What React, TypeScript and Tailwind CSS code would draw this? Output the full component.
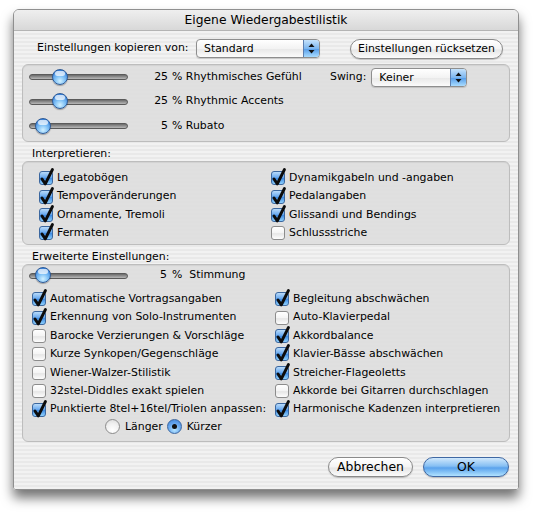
import React from 'react';

const stripes =
  'bg-[repeating-linear-gradient(180deg,#f2f2f2_0px,#f2f2f2_2px,#e9e9e9_2px,#e9e9e9_4px)]';

const Box = ({ checked }: { checked: boolean }) => (
  <span
    className={`relative shrink-0 w-[14px] h-[14px] rounded-[3px] border ${
      checked
        ? 'border-[#3b679f] bg-[linear-gradient(180deg,#b9dbfa_0%,#6aaaf0_45%,#3d8ae3_52%,#8fd0fc_100%)]'
        : 'border-[#8c8c8c] bg-[linear-gradient(180deg,#ffffff_0%,#f4f4f4_50%,#e6e6e6_55%,#fdfdfd_100%)]'
    }`}
  >
    {checked && (
      <svg className="absolute left-0 top-0 overflow-visible" width="14" height="14" viewBox="0 0 14 14">
        <path d="M2 7 L5.3 11.8 L12.4 -2.4" stroke="#0c0c0c" strokeWidth="3" fill="none" strokeLinecap="round" strokeLinejoin="round" />
      </svg>
    )}
  </span>
);

const Check = ({ checked, label }: { checked: boolean; label: string }) => (
  <div className="flex items-center h-[18.4px] gap-[4px]">
    <Box checked={checked} />
    <span className="whitespace-nowrap">{label}</span>
  </div>
);

const Radio = ({ checked, label }: { checked: boolean; label: string }) => (
  <div className="flex items-center gap-[5px]">
    <span
      className={`flex items-center justify-center w-[15px] h-[15px] rounded-full border ${
        checked
          ? 'border-[#3b679f] bg-[radial-gradient(circle_at_50%_75%,#b9e6ff_0%,#6aaaf0_50%,#3d7fd8_100%)]'
          : 'border-[#8c8c8c] bg-[radial-gradient(circle_at_50%_80%,#ffffff_0%,#f0f0f0_55%,#d8d8d8_100%)]'
      }`}
    >
      {checked && <span className="w-[5px] h-[5px] rounded-full bg-[#111]" />}
    </span>
    <span>{label}</span>
  </div>
);

const Slider = ({ thumb }: { thumb: number }) => (
  <div className="relative w-[99px] h-[17px] flex items-center shrink-0">
    <div className="w-full h-[6px] rounded-full border border-[#5a5a5a] bg-[linear-gradient(180deg,#6a6a6a,#9a9a9a_60%,#b8b8b8)]" />
    <span
      className="absolute top-[0px] w-[16px] h-[16px] rounded-full border border-[#2d5a97] bg-[radial-gradient(circle_at_50%_78%,#d2f1ff_0%,#7ec0f6_40%,#3b85de_80%,#2a66bf_100%)] shadow-[0_1px_1px_rgba(0,0,0,0.3)]"
      style={{ left: thumb - 8 }}
    >
      <span className="block mx-auto mt-[1px] w-[10px] h-[5px] rounded-full bg-white/70" />
    </span>
  </div>
);

const Popup = ({ value, width }: { value: string; width: number }) => (
  <div
    className="flex h-[19px] rounded-[4px] border border-[#8e8e8e] bg-[linear-gradient(180deg,#ffffff,#f3f3f3_50%,#e9e9e9_55%,#fbfbfb)] shadow-[0_1px_1px_rgba(0,0,0,0.15)] overflow-hidden"
    style={{ width }}
  >
    <span className="flex-1 pl-[7px] leading-[17px]">{value}</span>
    <span className="w-[16px] flex items-center justify-center border-l border-[#5c7fb0] bg-[linear-gradient(180deg,#c5e2fb,#7cb6ef_50%,#5aa0ea_55%,#a9dcff)]">
      <svg width="7" height="11" viewBox="0 0 7 11">
        <path d="M3.5 0.5 L6.5 4 L0.5 4 Z" fill="#111" />
        <path d="M3.5 10.5 L6.5 7 L0.5 7 Z" fill="#111" />
      </svg>
    </span>
  </div>
);

const PushButton = ({ label, width, primary }: { label: string; width: number; primary?: boolean }) => (
  <div
    className={`h-[20px] rounded-full border text-center leading-[18px] shadow-[0_1px_1px_rgba(0,0,0,0.2)] ${
      primary
        ? 'border-[#3f68a3] bg-[linear-gradient(180deg,#d0e8fc,#86bff3_45%,#5aa2ec_55%,#b0e2ff)]'
        : 'border-[#8a8a8a] bg-[linear-gradient(180deg,#ffffff,#f4f4f4_50%,#e6e6e6_55%,#fbfbfb)]'
    }`}
    style={{ width }}
  >
    {label}
  </div>
);

const SliderRow = ({ thumb, value, label }: { thumb: number; value: string; label: string }) => (
  <div className="flex items-center">
    <Slider thumb={thumb} />
    <span className="w-[40px] text-right">{value}</span>
    <span className="ml-[4px] whitespace-nowrap">% {label}</span>
  </div>
);

const groupBox = 'rounded-[6px] border border-[#bdbdbd] bg-[#dedede]/90 shadow-[inset_0_1px_1px_rgba(0,0,0,0.06)]';

export default function App() {
  return (
    <div className="min-h-screen bg-white pt-[9px] pl-[13px] font-['DejaVu_Sans',sans-serif] text-[10.9px] text-black">
      <div className="w-[506px] h-[481px] flex flex-col rounded-t-[6px] rounded-b-[3px] border border-[#8f8f8f] overflow-hidden shadow-[0_8px_12px_rgba(0,0,0,0.55)]">
        <div className="h-[21px] shrink-0 flex items-center justify-center border-b border-[#b4b4b4] bg-[linear-gradient(180deg,#efefef,#d8d8d8)] text-[12.3px]">
          Eigene Wiedergabestilistik
        </div>

        <div className={`flex-1 flex flex-col px-[8px] pt-[8px] ${stripes}`}>
          {/* copy settings row */}
          <div className="flex items-center h-[19px]">
            <span className="ml-[15px] w-[159px] whitespace-nowrap">Einstellungen kopieren von:</span>
            <Popup value="Standard" width={124} />
            <div className="ml-[30px]">
              <PushButton label="Einstellungen rücksetzen" width={153} />
            </div>
          </div>

          {/* sliders */}
          <div className={`mt-[6px] h-[78px] pl-[6px] ${groupBox}`}>
            <div className="flex items-center h-[24px]">
              <div className="flex items-center">
                <Slider thumb={31} />
                <span className="w-[40px] text-right">25</span>
                <span className="ml-[4px] w-[158px] whitespace-nowrap">% Rhythmisches Gefühl</span>
              </div>
              <span>Swing:</span>
              <div className="ml-[5px]">
                <Popup value="Keiner" width={96} />
              </div>
            </div>
            <div className="flex items-center h-[25px]">
              <SliderRow thumb={31} value="25" label="Rhythmic Accents" />
            </div>
            <div className="flex items-center h-[24px]">
              <SliderRow thumb={14} value="5" label="Rubato" />
            </div>
          </div>

          <div className="mt-[4px] h-[15px] leading-[15px] ml-[10px]">Interpretieren:</div>
          <div className={`h-[84px] pl-[16px] pt-[7px] flex ${groupBox}`}>
            <div className="w-[232px] flex flex-col">
              <Check checked label="Legatobögen" />
              <Check checked label="Tempoveränderungen" />
              <Check checked label="Ornamente, Tremoli" />
              <Check checked label="Fermaten" />
            </div>
            <div className="flex flex-col">
              <Check checked label="Dynamikgabeln und -angaben" />
              <Check checked label="Pedalangaben" />
              <Check checked label="Glissandi und Bendings" />
              <Check checked={false} label="Schlussstriche" />
            </div>
          </div>

          <div className="mt-[5px] h-[14px] leading-[14px] ml-[10px]">Erweiterte Einstellungen:</div>
          <div className={`h-[178px] flex flex-col ${groupBox}`}>
            <div className="flex items-center h-[21px] pl-[6px]">
              <Slider thumb={14} />
              <span className="w-[39px] text-right">5</span>
              <span className="ml-[5px]">%&nbsp; Stimmung</span>
            </div>
            <div className="flex pl-[9px] mt-[4px]">
              <div className="w-[243px] flex flex-col">
                <Check checked label="Automatische Vortragsangaben" />
                <Check checked label="Erkennung von Solo-Instrumenten" />
                <Check checked={false} label="Barocke Verzierungen & Vorschläge" />
                <Check checked={false} label="Kurze Synkopen/Gegenschläge" />
                <Check checked={false} label="Wiener-Walzer-Stilistik" />
                <Check checked={false} label="32stel-Diddles exakt spielen" />
                <Check checked label="Punktierte 8tel+16tel/Triolen anpassen:" />
                <div className="flex items-center gap-[4px] h-[16px] pl-[73px]">
                  <Radio checked={false} label="Länger" />
                  <Radio checked label="Kürzer" />
                </div>
              </div>
              <div className="flex flex-col">
                <Check checked label="Begleitung abschwächen" />
                <Check checked={false} label="Auto-Klavierpedal" />
                <Check checked label="Akkordbalance" />
                <Check checked label="Klavier-Bässe abschwächen" />
                <Check checked label="Streicher-Flageoletts" />
                <Check checked={false} label="Akkorde bei Gitarren durchschlagen" />
                <Check checked label="Harmonische Kadenzen interpretieren" />
              </div>
            </div>
          </div>

          <div className="mt-[15px] flex justify-end gap-[10px] pr-[1px] text-[12.4px]">
            <PushButton label="Abbrechen" width={85} />
            <PushButton label="OK" width={86} primary />
          </div>
        </div>
      </div>
    </div>
  );
}
